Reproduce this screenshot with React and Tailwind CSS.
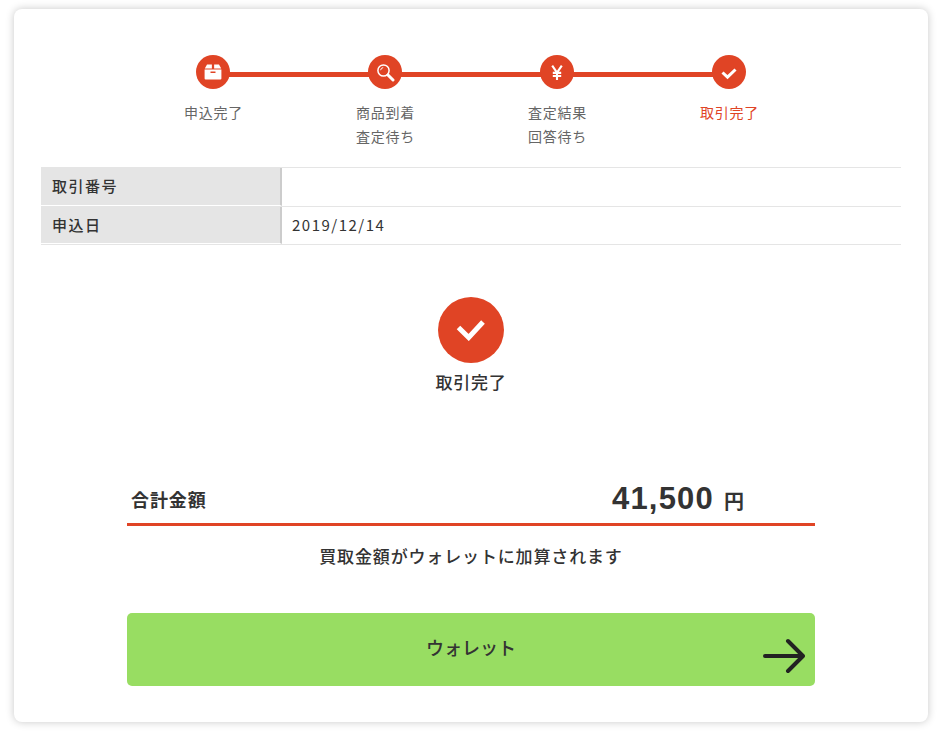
const jp = "font-['Noto_Sans_CJK_JP','Noto_Sans',sans-serif]";

function BoxIcon() {
  return (
    <svg width="18" height="16" viewBox="0 0 18 16" fill="#fff">
      <path d="M3 0.5h4.9v4H0.8L3 0.5z" />
      <path d="M10.1 0.5H15l2.2 4h-7.1v-4z" />
      <path fillRule="evenodd" d="M0.6 5.6h16.8v9a1 1 0 0 1-1 1H1.6a1 1 0 0 1-1-1v-9zM6.5 7.6v1.4h5V7.6h-5z" />
    </svg>
  );
}

function SearchIcon() {
  return (
    <svg width="19" height="19" viewBox="0 0 19 19" fill="none" stroke="#fff">
      <circle cx="7.5" cy="7.5" r="5.6" strokeWidth="1.5" />
      <path d="M4.6 7.2a3 3 0 0 1 2.6-2.6" strokeWidth="1" />
      <path d="M12 12l5 5" strokeWidth="3" strokeLinecap="round" />
    </svg>
  );
}

function YenIcon() {
  return (
    <svg width="12" height="15" viewBox="0 0 12 15" fill="none" stroke="#fff" strokeWidth="2.1">
      <path d="M1.2 0.6L6 7.6l4.8-7M6 7.2V15M1.8 7.9h8.4M1.8 11h8.4" />
    </svg>
  );
}

function SmallCheck() {
  return (
    <svg className="mt-[3px]" width="16" height="12" viewBox="0 0 16 12" fill="none" stroke="#fff" strokeWidth="3">
      <path d="M1.5 4.5L6.5 9.2L14.5 1.5" />
    </svg>
  );
}

function BigCheck() {
  return (
    <svg className="mt-[-1px]" width="30" height="22" viewBox="0 0 30 22" fill="none" stroke="#fff" strokeWidth="5">
      <path d="M2.5 8.5L12.7 18.5L27 3" />
    </svg>
  );
}

const steps = [
  { icon: <BoxIcon />, lines: ['申込完了'] },
  { icon: <SearchIcon />, lines: ['商品到着', '査定待ち'] },
  { icon: <YenIcon />, lines: ['査定結果', '回答待ち'] },
  { icon: <SmallCheck />, lines: ['取引完了'], current: true },
];

const rows = [
  { label: '取引番号', value: '' },
  { label: '申込日', value: '2019/12/14' },
];

export default function App() {
  return (
    <div className={`${jp} bg-white h-[734px] w-[942px] overflow-hidden pt-[9px] pl-[14px]`}>
      <div className="w-[914px] h-[713px] bg-white rounded-[8px] shadow-[0_0_8px_rgba(0,0,0,0.22)] px-[27px] pt-[46px]">
        <div className="flex w-[688px] mx-auto h-[112px]">
          {steps.map((s, i) => (
            <div key={i} className="relative w-[172px] flex flex-col items-center">
              {i < steps.length - 1 && (
                <div className="absolute left-[86px] top-[17px] w-[172px] h-[5px] bg-[#e04425]" />
              )}
              <div className="relative w-[34px] h-[34px] rounded-full bg-[#e04425] flex items-center justify-center">
                {s.icon}
              </div>
              <div className={`mt-[11px] pl-[1px] text-[14px] leading-[24px] tracking-[0.8px] text-center ${s.current ? 'text-[#e04425]' : 'text-[#666]'}`}>
                {s.lines.map((l) => (
                  <div key={l}>{l}</div>
                ))}
              </div>
            </div>
          ))}
        </div>

        <div className="border-t border-[#e5e5e5]">
          {rows.map((r) => (
            <div key={r.label} className="flex h-[39px] border-b border-[#e5e5e5] last:h-[38px]">
              <div className="w-[241px] h-full border-b border-white border-r-2 border-r-[#ccc] bg-[#e5e5e5] px-[11px] flex items-center text-[15px] font-medium tracking-[1.5px] text-[#333]">
                {r.label}
              </div>
              <div className="flex-1 px-[10px] flex items-center text-[15px] tracking-[1.5px] text-[#333]">
                {r.value}
              </div>
            </div>
          ))}
        </div>

        <div className="flex flex-col items-center mt-[52px]">
          <div className="w-[66px] h-[66px] rounded-full bg-[#e04425] flex items-center justify-center">
            <BigCheck />
          </div>
          <div className="mt-[7px] text-[17px] leading-[24px] font-medium tracking-[0.8px] text-[#333]">取引完了</div>
        </div>

        <div className="w-[688px] mx-auto mt-[86px]">
          <div className="flex items-end h-[46px] border-b-[3px] border-[#e04425] pl-[4px] pb-[10px]">
            <div className="mb-[1px] text-[18px] leading-[26px] font-bold tracking-[0.9px] text-[#333]">合計金額</div>
            <div className="ml-auto mr-[71px] flex items-baseline text-[#333] mb-[-3px]">
              <span className="font-['Liberation_Sans',sans-serif] text-[31px] leading-[34px] font-bold tracking-[1.2px]">41,500</span>
              <span className="ml-[10px] text-[20px] leading-[24px] font-bold">円</span>
            </div>
          </div>
          <div className="mt-[17px] text-center text-[17px] leading-[26px] font-medium tracking-[0.85px] text-[#333]">
            買取金額がウォレットに加算されます
          </div>
          <div className="relative mt-[44px] h-[73px] rounded-[5px] bg-[#98dd62] flex items-center justify-center text-[18px] pb-[4px] font-medium text-[#333]">
            ウォレット
            <svg className="absolute right-[10px] top-[25px]" width="42" height="36" viewBox="0 0 42 36" fill="none" stroke="#222" strokeWidth="4" strokeLinecap="round" strokeLinejoin="round">
              <path d="M2 18h37M25 3l15 15-15 15" />
            </svg>
          </div>
        </div>
      </div>
    </div>
  );
}
